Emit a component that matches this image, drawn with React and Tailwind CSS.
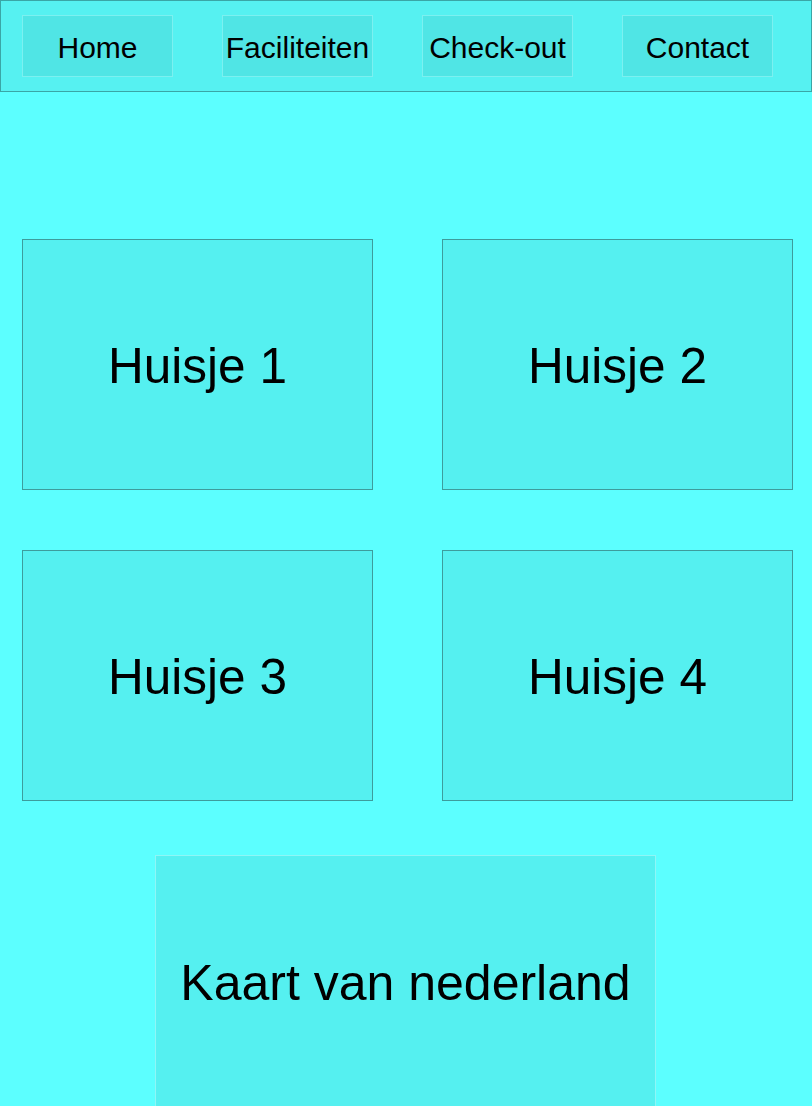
import React from "react";

const navItems = ["Home", "Faciliteiten", "Check-out", "Contact"];
const huisjes = ["Huisje 1", "Huisje 2", "Huisje 3", "Huisje 4"];

const App = () => {
  return (
    <div
      className="bg-[#5cffff] min-h-screen overflow-hidden"
      style={{ fontFamily: '"Liberation Sans", Arial, sans-serif' }}
    >
      {/* Navigatie */}
      <div className="h-[92px] bg-[#56f1f1] border border-[#3aa6a6] flex items-center pl-[21px] gap-[49px]">
        {navItems.map((item) => (
          <div
            key={item}
            className="w-[151px] h-[62px] bg-[#50e5e5] border border-[#7cf0f0] flex items-center justify-center pt-[3px] text-[30px] text-black whitespace-nowrap"
          >
            {item}
          </div>
        ))}
      </div>

      {/* Huisjes */}
      <div className="mt-[147px] pl-[22px] grid grid-cols-[351px_351px] gap-x-[69px] gap-y-[60px]">
        {huisjes.map((h) => (
          <div
            key={h}
            className="h-[251px] bg-[#55f0f0] border border-[#3d9c9c] flex items-center justify-center pt-[4px] text-[49.5px] text-black"
          >
            {h}
          </div>
        ))}
      </div>

      {/* Kaart */}
      <div className="mt-[54px] ml-[155px] w-[501px] h-[320px] bg-[#55f0f0] border border-[#8ef6f6] flex items-start justify-center pt-[90px] text-[50px] text-black whitespace-nowrap">
        Kaart van nederland
      </div>
    </div>
  );
};

export default App;
